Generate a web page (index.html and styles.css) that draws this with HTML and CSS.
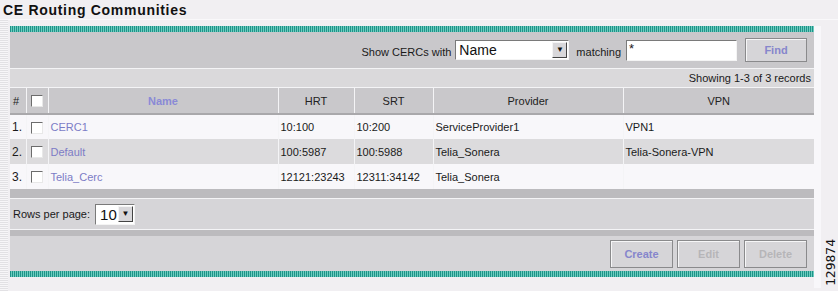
FILE: index.html
```html
<!DOCTYPE html>
<html>
<head>
    <title>CE Routing Communities</title>
    <link rel="stylesheet" href="styles.css">
</head>
<body>
    <h1 class="page-title">CE Routing Communities</h1>

    <div class="frame">
        <div class="edge-left"></div>

        <div class="panel">
            <div class="teal-bar"></div>

            <div class="toolbar">
                <span class="label">Show CERCs with</span>
                <div class="select select-wide"><span>Name</span><span class="arrow">&#9660;</span></div>
                <span class="label">matching</span>
                <div class="text-input">*</div>
                <div class="btn btn-active btn-find">Find</div>
            </div>

            <div class="records">Showing 1-3 of 3 records</div>

            <table class="grid">
                <thead>
                    <tr>
                        <th class="col-num">#</th>
                        <th class="col-cb"><span class="check"></span></th>
                        <th class="col-name sortable">Name</th>
                        <th class="col-hrt">HRT</th>
                        <th class="col-srt">SRT</th>
                        <th class="col-prov">Provider</th>
                        <th class="col-vpn">VPN</th>
                    </tr>
                </thead>
                <tbody>
                    <tr>
                        <td>1.</td>
                        <td class="cb"><span class="check"></span></td>
                        <td><a href="#">CERC1</a></td>
                        <td>10:100</td>
                        <td>10:200</td>
                        <td>ServiceProvider1</td>
                        <td>VPN1</td>
                    </tr>
                    <tr class="alt">
                        <td>2.</td>
                        <td class="cb"><span class="check"></span></td>
                        <td><a href="#">Default</a></td>
                        <td>100:5987</td>
                        <td>100:5988</td>
                        <td>Telia_Sonera</td>
                        <td>Telia-Sonera-VPN</td>
                    </tr>
                    <tr>
                        <td>3.</td>
                        <td class="cb"><span class="check"></span></td>
                        <td><a href="#">Telia_Cerc</a></td>
                        <td>12121:23243</td>
                        <td>12311:34142</td>
                        <td>Telia_Sonera</td>
                        <td></td>
                    </tr>
                </tbody>
            </table>

            <div class="gray-bar"></div>

            <div class="pager">
                <span class="label">Rows per page:</span>
                <div class="select select-small"><span>10</span><span class="arrow">&#9660;</span></div>
            </div>

            <div class="gray-bar thin"></div>

            <div class="actions">
                <div class="btn btn-active">Create</div>
                <div class="btn btn-off">Edit</div>
                <div class="btn btn-off">Delete</div>
            </div>

            <div class="teal-bar"></div>
        </div>

        <div class="side">
            <div class="side-strip"></div>
            <div class="fig-num">129874</div>
        </div>
    </div>
</body>
</html>
```

FILE: styles.css
```css
body {
    margin: 0;
    background-color: #f1eff2;
    font-family: "Liberation Sans", Arial, sans-serif;
    font-size: 11px;
    color: #1a1a1a;
    width: 838px;
    height: 291px;
    overflow: hidden;
}

.page-title {
    margin: 0;
    height: 20px;
    padding: 3px 0 0 3px;
    box-sizing: border-box;
    font-size: 14px;
    line-height: 15px;
    font-weight: bold;
    letter-spacing: 0.7px;
    color: #111;
    border-bottom: 1px solid #f9f8fa;
}

.frame {
    display: flex;
    height: 271px;
}

.edge-left {
    width: 8px;
    margin-right: 2px;
    background: repeating-linear-gradient(0deg, #e2e1e4 0 1px, #f7f6f8 1px 2px);
}

.panel {
    width: 804px;
    margin-top: 6px;
    display: flex;
    flex-direction: column;
    align-self: flex-start;
}

.teal-bar {
    height: 6px;
    background: repeating-linear-gradient(90deg, #1e9488 0 1px, #6ecbc0 1px 2px);
}

.toolbar {
    height: 36px;
    background-color: #c9c8cb;
    display: flex;
    align-items: center;
    justify-content: flex-end;
    padding-right: 7px;
    border-bottom: 1px solid #f4f4f6;
}

.label {
    color: #1a1a1a;
}

.toolbar .label {
    margin-top: 3px;
}

.select {
    display: flex;
    align-items: center;
    justify-content: space-between;
    background-color: #fff;
    border: 1px solid;
    border-color: #7a7a7a #f4f4f4 #f4f4f4 #7a7a7a;
    box-sizing: border-box;
    height: 20px;
    font-size: 14px;
    color: #111;
    padding-left: 3px;
}

.select .arrow {
    width: 15px;
    height: 16px;
    background-color: #d8d7da;
    border: 1px solid;
    border-color: #f4f4f4 #444 #444 #f4f4f4;
    box-sizing: border-box;
    font-size: 8px;
    line-height: 14px;
    text-align: center;
    margin-right: 1px;
}

.select-wide {
    width: 114px;
    margin: 0 7px 0 4px;
}

.select-small {
    width: 40px;
    height: 21px;
    margin-left: 5px;
    padding-left: 4px;
    font-size: 15px;
}

.text-input {
    width: 111px;
    height: 21px;
    box-sizing: border-box;
    background-color: #fff;
    border: 1px solid;
    border-color: #7a7a7a #f4f4f4 #f4f4f4 #7a7a7a;
    margin: 0 8px 0 5px;
    padding-left: 2px;
    font-size: 13px;
    line-height: 15px;
}

.btn {
    height: 24px;
    box-sizing: border-box;
    border: 1px solid #8a8a8c;
    box-shadow: inset 1px 1px 0 #f6f6f7;
    background-color: #d6d5d8;
    font-weight: bold;
    font-size: 11px;
    display: flex;
    align-items: center;
    justify-content: center;
}

.btn-find {
    width: 62px;
}

.btn-active {
    color: #8686cc;
}

.btn-off {
    color: #b6b5b8;
}

.records {
    height: 18px;
    background-color: #dad9db;
    text-align: right;
    padding-right: 3px;
    line-height: 18px;
    border-bottom: 1px solid #f4f4f6;
}

.grid {
    width: 804px;
    border-collapse: collapse;
    table-layout: fixed;
}

.grid th,
.grid td {
    box-sizing: border-box;
}

.grid th {
    height: 26px;
    background-color: #c9c8cb;
    font-weight: normal;
    color: #222;
    border-left: 1px solid #f4f4f6;
    border-bottom: 2px solid #a9a8ab;
    padding: 0;
    text-align: center;
}

.grid th:first-child {
    border-left: none;
    text-align: left;
    padding-left: 3px;
}

.grid th.sortable {
    font-weight: bold;
    color: #8a8ad6;
}

.grid td {
    height: 25px;
    padding: 0 0 0 2px;
    border-left: 1px solid #f4f4f6;
    white-space: nowrap;
    color: #1a1a1a;
}

.grid td:first-child {
    border-left: none;
    padding-left: 2px;
    font-size: 12px;
}

.grid tbody tr {
    background-color: #f8f7fa;
}

.grid tbody tr.alt {
    background-color: #dcdbdd;
}

.grid td.cb,
.grid th.col-cb {
    text-align: center;
    padding: 0;
}

.col-num { width: 16px; }
.col-cb { width: 22px; }
.col-name { width: 230px; }
.col-hrt { width: 76px; }
.col-srt { width: 79px; }
.col-prov { width: 190px; }
.col-vpn { width: 191px; }

.check {
    display: inline-block;
    width: 12px;
    height: 12px;
    box-sizing: border-box;
    background-color: #fff;
    border: 1px solid;
    border-color: #6c6c6c #e8e8e8 #e8e8e8 #6c6c6c;
    vertical-align: middle;
}

.grid a {
    color: #7c7cc6;
    text-decoration: none;
}

.gray-bar {
    height: 9px;
    background-color: #bcbbbe;
    border-bottom: 1px solid #f4f4f6;
}

.gray-bar.thin {
    height: 6px;
    border-bottom: none;
}

.pager {
    height: 30px;
    background-color: #d6d5d8;
    display: flex;
    align-items: center;
    padding-left: 3px;
    border-bottom: 1px solid #f4f4f6;
}

.actions {
    height: 35px;
    background-color: #d6d5d8;
    display: flex;
    align-items: center;
    justify-content: flex-end;
    gap: 4px;
    padding-right: 7px;
}

.actions .btn {
    width: 63px;
    height: 28px;
}

.side {
    width: 24px;
    display: flex;
    align-items: flex-end;
    padding-bottom: 5px;
}

.side-strip {
    width: 7px;
    height: 262px;
    align-self: flex-start;
    margin-top: 6px;
    background-color: #f8f7fa;
}

.fig-num {
    writing-mode: vertical-rl;
    transform: rotate(180deg);
    font-family: "DejaVu Sans Mono", monospace;
    font-size: 13px;
    color: #111;
    margin-left: 2px;
}
```
